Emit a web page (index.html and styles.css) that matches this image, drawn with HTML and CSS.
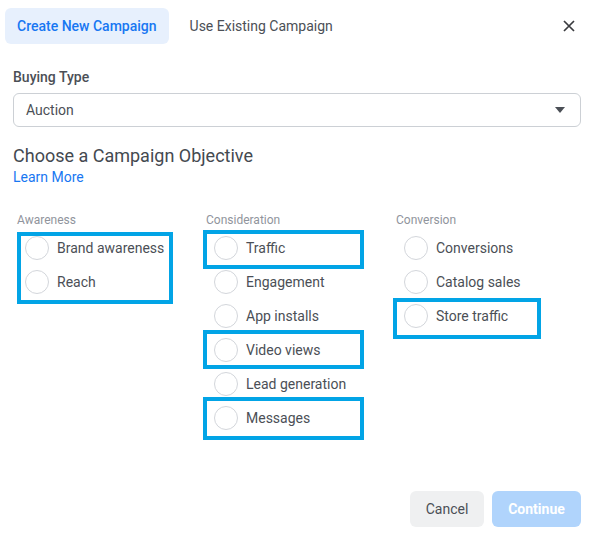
FILE: index.html
```html
<!DOCTYPE html>
<html>
<head>
<meta charset="utf-8">
<link rel="stylesheet" href="styles.css">
</head>
<body>
<div class="dialog">
  <div class="header">
    <div class="tab tab-active">Create New Campaign</div>
    <div class="tab">Use Existing Campaign</div>
    <div class="close">
      <svg width="12" height="12" viewBox="0 0 12 12"><path d="M1 1L11 11M11 1L1 11" stroke="#3a3b3f" stroke-width="1.7" fill="none"/></svg>
    </div>
  </div>
  <div class="content">
    <div class="label">Buying Type</div>
    <div class="select">
      <span>Auction</span>
      <span class="caret"></span>
    </div>
    <div class="heading">Choose a Campaign Objective</div>
    <div class="link">Learn More</div>
    <div class="columns">
      <div class="col">
        <div class="col-title">Awareness</div>
        <div class="hl hl-aw">
          <div class="row"><span class="radio"></span>Brand awareness</div>
          <div class="row"><span class="radio"></span>Reach</div>
        </div>
      </div>
      <div class="col">
        <div class="col-title">Consideration</div>
        <div class="row hl hl-a"><span class="radio"></span>Traffic</div>
        <div class="row"><span class="radio"></span>Engagement</div>
        <div class="row"><span class="radio"></span>App installs</div>
        <div class="row hl hl-b"><span class="radio"></span>Video views</div>
        <div class="row"><span class="radio"></span>Lead generation</div>
        <div class="row hl hl-c"><span class="radio"></span>Messages</div>
      </div>
      <div class="col">
        <div class="col-title">Conversion</div>
        <div class="row"><span class="radio"></span>Conversions</div>
        <div class="row"><span class="radio"></span>Catalog sales</div>
        <div class="row hl hl-d"><span class="radio"></span>Store traffic</div>
      </div>
    </div>
  </div>
  <div class="footer">
    <div class="btn btn-cancel">Cancel</div>
    <div class="btn btn-continue">Continue</div>
  </div>
</div>
</body>
</html>
```
FILE: styles.css
```css
html, body {
  margin: 0;
  padding: 0;
  background: #ffffff;
}
body {
  font-family: Roboto, "Liberation Sans", Arial, sans-serif;
  color: #444950;
}
.dialog {
  width: 595px;
  height: 539px;
  box-sizing: border-box;
  display: flex;
  flex-direction: column;
  background: #ffffff;
}
.header {
  display: flex;
  align-items: center;
  padding: 8px 0 0 5px;
  height: 36px;
}
.tab {
  height: 36px;
  line-height: 36px;
  padding: 0 12px;
  font-size: 14px;
  color: #4b4f56;
  border-radius: 6px;
  margin-right: 9px;
}
.tab-active {
  background: #e7f0fd;
  color: #1877f2;
  font-weight: 500;
}
.close {
  margin-left: auto;
  margin-right: 20px;
  width: 12px;
  height: 12px;
  display: flex;
}
.content {
  padding: 0 14px 0 13px;
  flex: 1;
}
.label {
  margin-top: 25px;
  font-size: 14px;
  line-height: 16px;
  font-weight: 500;
  color: #4b4f56;
}
.select {
  margin-top: 8px;
  height: 34px;
  box-sizing: border-box;
  border: 1px solid #ccd0d5;
  border-radius: 6px;
  display: flex;
  align-items: center;
  justify-content: space-between;
  padding: 0 15px 0 12px;
  font-size: 14px;
  color: #4b4f56;
}
.caret {
  width: 0;
  height: 0;
  border-left: 5px solid transparent;
  border-right: 5px solid transparent;
  border-top: 6px solid #4b4f56;
}
.heading {
  margin-top: 19px;
  font-size: 18px;
  line-height: 20px;
  color: #444950;
}
.link {
  margin-top: 2px;
  font-size: 14px;
  line-height: 18px;
  color: #1877f2;
}
.columns {
  margin-top: 26px;
  margin-left: 4px;
  display: grid;
  grid-template-columns: 189px 190px 1fr;
}
.col-title {
  font-size: 12px;
  line-height: 16px;
  color: #90949c;
  margin-bottom: 3px;
}
.row {
  height: 34px;
  display: flex;
  align-items: center;
  gap: 8px;
  padding-left: 8px;
  font-size: 14px;
  color: #4b4f56;
}
.radio {
  width: 24px;
  height: 24px;
  box-sizing: border-box;
  border: 1px solid #d3d6db;
  border-radius: 50%;
  flex: none;
}
.hl {
  position: relative;
}
.hl::after {
  content: "";
  position: absolute;
  box-sizing: border-box;
  border: 4px solid #02a4e6;
  pointer-events: none;
}
.hl-aw::after { left: 0; width: 156px; top: 1px; bottom: -5px; }
.hl-a::after { left: -3px; width: 161px; top: -1px; bottom: -4px; }
.hl-b::after { left: -3px; width: 161px; top: -3px; bottom: -2px; }
.hl-c::after { left: -3px; width: 161px; top: -4px; bottom: -5px; }
.hl-d::after { left: -3px; width: 148px; top: -1px; bottom: -6px; }
.footer {
  display: flex;
  justify-content: flex-end;
  gap: 8px;
  padding: 0 14px 12px 0;
}
.btn {
  height: 36px;
  line-height: 36px;
  border-radius: 6px;
  font-size: 14px;
  text-align: center;
}
.btn-cancel {
  width: 74px;
  background: #eff0f1;
  color: #4b4f56;
}
.btn-continue {
  width: 89px;
  background: #b0d4fc;
  color: #ffffff;
  font-weight: 700;
}
```
